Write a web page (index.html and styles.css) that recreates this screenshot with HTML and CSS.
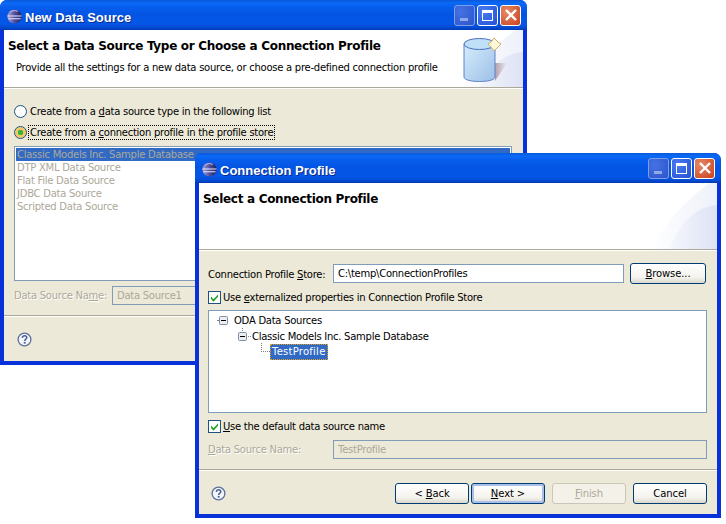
FILE: index.html
```html
<!DOCTYPE html>
<html lang="en">
<head>
<meta charset="utf-8">
<title>New Data Source</title>
<link rel="stylesheet" href="styles.css">
</head>
<body>
<svg class="defs" width="0" height="0" aria-hidden="true">
  <defs>
    <linearGradient id="eg" x1="0" y1="0" x2="1" y2="0"><stop offset="0" stop-color="#a5a1dc"/><stop offset="0.5" stop-color="#51509f"/><stop offset="1" stop-color="#1d1d60"/></linearGradient>
    <linearGradient id="cl" x1="0" y1="0" x2="1" y2="0"><stop offset="0" stop-color="#fff"/><stop offset="1" stop-color="#eef1fa"/></linearGradient>
    <linearGradient id="cd" x1="0" y1="0" x2="1" y2="0"><stop offset="0" stop-color="#f6f7fd"/><stop offset="1" stop-color="#dde2f4"/></linearGradient>
    <symbol id="eclipse" viewBox="0 0 16 16">
      <circle cx="8" cy="8" r="7.500" fill="url(#eg)"/>
      <path d="M.5 7.500h15M1.500 10.500h13" stroke="#e8e8fa" stroke-width="1.100" fill="none"/>
      <path d="M3 3.600C5 1.500 9 1.200 11.500 2.600" stroke="#c9c6ee" stroke-width="1" fill="none"/>
    </symbol>
    <symbol id="help" viewBox="0 0 16 16">
      <circle cx="8" cy="8" r="6.800" fill="#f4f6fb" stroke="#5d6f9c" stroke-width="1.400"/>
      <path d="M5.700 6.200C5.900 4.600 7 4 8.100 4c1.400 0 2.300.9 2.300 2 0 1.600-2.200 1.700-2.200 3.600" fill="none" stroke="#46608f" stroke-width="1.600"/>
      <rect x="7.200" y="10.600" width="2" height="1.800" fill="#46608f"/>
    </symbol>
    <symbol id="check" viewBox="0 0 13 13">
      <rect x=".5" y=".5" width="12" height="12" fill="#fff" stroke="#1c5180"/>
      <path d="M3 5.500l2.500 2.800L10 3.400v2.400L5.500 10.700 3 7.900z" fill="#21a121"/>
    </symbol>
    <symbol id="minus" viewBox="0 0 9 9">
      <rect x=".5" y=".5" width="8" height="8" rx="1" fill="#eceef0" stroke="#7b8ea8"/>
      <path d="M2 4.500h5" stroke="#000"/>
    </symbol>
    <symbol id="corner" viewBox="0 0 70 67">
      <path d="M70 0H63C45 12 20 36 3 67H70z" fill="url(#cl)"/>
      <path d="M70 22C50 24 35 36 22 67H70z" fill="url(#cd)"/>
    </symbol>
  </defs>
</svg>

<section class="window window-back">
  <header class="titlebar">
    <svg class="app-icon"><use href="#eclipse"/></svg>
    <h1 class="title">New Data Source</h1>
    <div class="controls">
      <span class="ctl ctl-min"><i class="g-min"></i></span>
      <span class="ctl ctl-max"><i class="g-max"></i></span>
      <span class="ctl ctl-close"><svg viewBox="0 0 14 14"><path d="M2 2l10 10M12 2L2 12" stroke="#fff" stroke-width="2.400"/></svg></span>
    </div>
  </header>
  <div class="client">
    <div class="banner banner-back">
      <svg class="corner"><use href="#corner"/></svg>
      <h2 class="banner-title">Select a Data Source Type or Choose a Connection Profile</h2>
      <p class="banner-desc">Provide all the settings for a new data source, or choose a pre-defined connection profile</p>
      <svg class="db" viewBox="0 0 46 50">
        <defs>
          <linearGradient id="dbg" x1="0" y1="0" x2="1" y2="1"><stop offset="0" stop-color="#d6ecfb"/><stop offset="1" stop-color="#9cc0e8"/></linearGradient>
          <linearGradient id="dbs" x1="0" y1="0" x2="1" y2="0"><stop offset="0" stop-color="#a88c94" stop-opacity=".8"/><stop offset="1" stop-color="#a88c94" stop-opacity="0"/></linearGradient>
        </defs>
        <path d="M32 26h12l-12 18z" fill="url(#dbs)"/>
        <path d="M1 7v33c0 6 31 6 31 0V7z" fill="url(#dbg)" stroke="#5f82c8" stroke-width="1"/>
        <ellipse cx="16.500" cy="7" rx="15.500" ry="5.500" fill="#bfe0f6" stroke="#4a6fc0"/>
        <path d="M31 1l4 4 3 2-3 3-4 4-3-4-3-3 3-2z" fill="#fdf6d8" stroke="#cdb063"/>
      </svg>
    </div>
    <div class="body body-back">
      <label class="opt"><i class="radio"></i><span>Create from a <u>d</u>ata source type in the following list</span></label>
      <label class="opt"><i class="radio radio-on"></i><span class="focused">Create from a <u>c</u>onnection profile in the profile store</span></label>
      <ul class="list">
        <li class="sel">Classic Models Inc. Sample Database</li>
        <li>DTP XML Data Source</li>
        <li>Flat File Data Source</li>
        <li>JDBC Data Source</li>
        <li>Scripted Data Source</li>
      </ul>
      <div class="name-row name-row-back">
        <span class="engraved">Data Source Na<u>m</u>e:</span>
        <span class="field field-disabled field-white">Data Source1</span>
      </div>
    </div>
    <footer class="foot foot-back">
      <svg class="help"><use href="#help"/></svg>
    </footer>
  </div>
</section>

<section class="window window-front">
  <header class="titlebar">
    <svg class="app-icon"><use href="#eclipse"/></svg>
    <h1 class="title">Connection Profile</h1>
    <div class="controls">
      <span class="ctl ctl-min"><i class="g-min"></i></span>
      <span class="ctl ctl-max"><i class="g-max"></i></span>
      <span class="ctl ctl-close"><svg viewBox="0 0 14 14"><path d="M2 2l10 10M12 2L2 12" stroke="#fff" stroke-width="2.400"/></svg></span>
    </div>
  </header>
  <div class="client">
    <div class="banner banner-front">
      <svg class="corner"><use href="#corner"/></svg>
      <h2 class="banner-title">Select a Connection Profile</h2>
    </div>
    <div class="body body-front">
      <div class="store-row">
        <span class="store-label">Connection Profile <u>S</u>tore:</span>
        <span class="field field-store">C:\temp\ConnectionProfiles</span>
        <button class="btn btn-browse" type="button"><u>B</u>rowse...</button>
      </div>
      <label class="chk"><svg class="check"><use href="#check"/></svg><span>Use <u>e</u>xternalized properties in Connection Profile Store</span></label>
      <div class="tree">
        <div class="node node-0"><span class="dots"></span><svg class="minus"><use href="#minus"/></svg><span class="node-text">ODA Data Sources</span></div>
        <div class="node node-1"><svg class="minus"><use href="#minus"/></svg><span class="dots"></span><span>Classic Models Inc. Sample Database</span></div>
        <div class="node node-2"><span class="elbow"></span><span class="tree-sel">TestProfile</span></div>
      </div>
      <label class="chk chk-2"><svg class="check"><use href="#check"/></svg><span><u>U</u>se the default data source name</span></label>
      <div class="name-row name-row-front">
        <span class="engraved"><u>D</u>ata Source Name:</span>
        <span class="field field-disabled">TestProfile</span>
      </div>
    </div>
    <footer class="foot foot-front">
      <svg class="help"><use href="#help"/></svg>
      <div class="buttons">
        <button class="btn" type="button">&lt; <u>B</u>ack</button>
        <button class="btn btn-default" type="button"><u>N</u>ext &gt;</button>
        <button class="btn btn-off" type="button" disabled><u>F</u>inish</button>
        <button class="btn" type="button">Cancel</button>
      </div>
    </footer>
  </div>
</section>
</body>
</html>
```
FILE: styles.css
```css
* { box-sizing: border-box; }
html, body { margin: 0; padding: 0; }
body {
  width: 726px;
  height: 524px;
  background: #fff;
  position: relative;
  overflow: hidden;
  font: 10px/13px "DejaVu Sans", Verdana, sans-serif;
  letter-spacing: -.26px;
  color: #000;
}
.defs { position: absolute; }
.window {
  position: absolute;
  display: flex;
  flex-direction: column;
  border-radius: 7px 7px 0 0;
  background: #0831d9;
  overflow: hidden;
}
.window-back { left: 0; top: 0; width: 527px; height: 365px; }
.window-front { left: 195px; top: 153px; width: 526px; height: 365px; }
.titlebar {
  height: 30px;
  flex: none;
  display: flex;
  align-items: center;
  padding: 0 6px 0 7px;
  background: linear-gradient(#0a58d8 0, #0a6af6 3px, #0860ee 6px, #0455e4 14px, #0456e6 24px, #0348cf 28px, #0238b0 30px);
}
.app-icon { width: 15px; height: 15px; flex: none; margin-top: 3px; }
.title {
  margin: 6px 0 0 3px;
  flex: 1;
  font: bold 13px/16px "Liberation Sans", Arial, sans-serif;
  letter-spacing: 0;
  color: #fff;
  text-shadow: 1px 1px 0 #0a2a8c;
}
.controls { display: flex; gap: 2px; }
.ctl {
  width: 21px;
  height: 21px;
  border: 1px solid #fff;
  border-radius: 3px;
  background: radial-gradient(circle at 30% 30%, #4a7cf0, #2450d4);
  display: flex;
  align-items: center;
  justify-content: center;
  position: relative;
}
.ctl-min { border-color: #7f9ee8; background: radial-gradient(circle at 30% 30%, #4472e4, #2c54c8); }
.ctl-close { background: radial-gradient(circle at 30% 30%, #e88a66, #c8401c); }
.ctl-close svg { width: 14px; height: 14px; }
.g-min { width: 8px; height: 3px; background: #8fa8e8; margin-top: 8px; margin-right: 1px; }
.g-max { width: 11px; height: 11px; border: 1px solid #fff; border-top-width: 3px; }
.client {
  flex: 1;
  min-height: 0;
  margin: 0 4px 4px 4px;
  background: #ece9d8;
  display: flex;
  flex-direction: column;
}
.banner {
  flex: none;
  background: #fff;
  position: relative;
  border-bottom: 1px solid #aca899;
  overflow: hidden;
}
.banner-back { height: 58px; padding: 8px 0 0 4px; }
.banner-front { height: 67px; padding: 8px 0 0 4px; }
.corner { position: absolute; right: 0; top: 0; width: 70px; height: 67px; }
.banner-title {
  margin: 0;
  font: bold 12px/16px "DejaVu Sans", Verdana, sans-serif;
  letter-spacing: -.3px;
  position: relative;
}
.banner-desc { margin: 7px 0 0 8px; position: relative; }
.db { position: absolute; right: 14px; top: 7px; width: 46px; height: 50px; }
.body { flex: 1; min-height: 0; border-top: 1px solid #fff; position: relative; }
.body-back { padding: 12px 10px 0; }
.opt { display: flex; align-items: center; height: 21px; gap: 3px; }
.radio {
  width: 13px; height: 13px; flex: none;
  border: 1px solid #1c5180; border-radius: 50%;
  background: #fff;
}
.radio-on { background: radial-gradient(circle, #36b636 0 2.5px, #f6c66a 3px 5px, #fff 6px); }
.focused { outline: 1px dotted #000; outline-offset: 0; padding: 0 1px; margin-left: -1px; }
.list {
  list-style: none;
  margin: 3px 0 0;
  padding: 1px;
  height: 135px;
  background: #fff;
  border: 1px solid #7f9db9;
  color: #aca899;
  width: 498px;
}
.list li { height: 13px; padding-left: 1px; }
.list .sel { background: #316ac5; color: #aca899; }
.name-row { display: flex; align-items: center; }
.name-row-back { margin-top: 5px; }
.engraved { color: #aca899; text-shadow: 1px 1px 0 #fff; flex: none; white-space: nowrap; }
.name-row-back .engraved { width: 98px; }
.field {
  display: flex;
  align-items: center;
  height: 19px;
  padding: 0 4px;
  border: 1px solid #7f9db9;
  background: #fff;
}
.field-disabled { flex: 1; background: #ece9d8; color: #aca899; }
.field-white { max-width: 398px; }
.foot { flex: none; border-top: 1px solid #aca899; box-shadow: inset 0 1px 0 #fff; display: flex; align-items: center; }
.foot-back { height: 46px; padding: 1px 0 0 13px; }
.foot-front { height: 45px; padding: 2px 10px 0 12px; justify-content: space-between; }
.help { width: 15px; height: 15px; flex: none; }
.body-front { padding: 12px 10px 0 9px; }
.store-row { display: flex; align-items: flex-start; height: 22px; }
.store-label { width: 125px; flex: none; margin-top: 5px; }
.field-store { width: 291px; height: 19px; flex: none; margin-top: 1px; }
.btn {
  font: 10px/13px "DejaVu Sans", Verdana, sans-serif;
  letter-spacing: -.1px;
  color: #000;
  width: 74px;
  height: 21px;
  padding: 0;
  border: 1px solid #003c74;
  border-radius: 3px;
  background: linear-gradient(#fff, #f4f3ee 70%, #dcd8ce);
}
.btn-browse { width: 76px; margin-left: 6px; }
.btn-default { box-shadow: inset 0 0 0 2px #a8c0ea; }
.btn-off { border-color: #c9c7ba; background: #f3f1e8; color: #aca899; }
.chk { display: flex; align-items: center; gap: 2px; height: 13px; }
.store-row + .chk { margin-top: 6px; }
.check { width: 13px; height: 13px; flex: none; }
.tree {
  margin-top: 6px;
  height: 103px;
  padding-top: 1px;
  background: #fff;
  border: 1px solid #7f9db9;
}
.node { height: 16px; display: flex; align-items: center; position: relative; }
.node .minus { width: 9px; height: 9px; flex: none; margin-right: 1px; }
.dots { width: 3px; border-top: 1px dotted #808080; margin-right: 1px; flex: none; }
.node-0 { padding-left: 8px; }
.node-0 .dots { width: 2px; margin-right: 0; }
.node-text { margin-left: 5px; }
.node-1 { padding-left: 29px; }
.node-1::before {
  content: "";
  position: absolute;
  left: 33px;
  top: 0;
  height: 3px;
  border-left: 1px dotted #808080;
}
.node-2 { padding-left: 52px; }
.elbow { width: 9px; height: 9px; border-left: 1px dotted #808080; border-bottom: 1px dotted #808080; margin-top: -9px; flex: none; }
.tree-sel { width: 58px; background: #316ac5; color: #fff; padding: 0 2px; line-height: 16px; letter-spacing: .25px; outline: 1px dotted #e0a020; outline-offset: -1px; }
.chk-2 { margin-top: 7px; }
.name-row-front { margin-top: 7px; }
.name-row-front .engraved { width: 125px; }
.buttons { display: flex; gap: 2px; }
.buttons .btn-off { margin-left: 5px; }
.buttons .btn-off + .btn { margin-left: 5px; }
```
